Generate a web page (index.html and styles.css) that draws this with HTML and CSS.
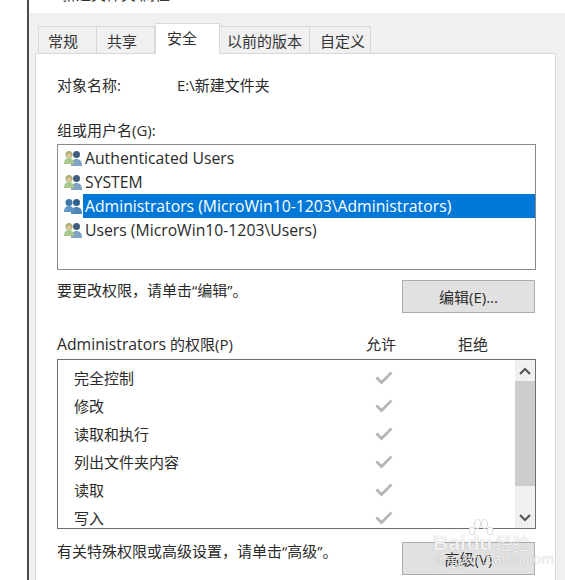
FILE: index.html
```html
<!DOCTYPE html>
<html lang="zh-CN">
<head>
<meta charset="utf-8">
<title>新建文件夹 属性</title>
<link rel="stylesheet" href="styles.css">
</head>
<body>
<svg class="defs" width="0" height="0" aria-hidden="true">
  <symbol id="chk" viewBox="0 0 18 14"><path d="M1.500 6.500 6.500 11.500 16.500 1.500" fill="none" stroke="#b5b5b5" stroke-width="2.800"/></symbol>
</svg>
<div class="window">
  <div class="titlebar">
    <svg class="folder" width="14" height="12" viewBox="0 0 14 12"><path d="M0 0h14v4Q8 6 3 5H0z" fill="#f3d27a"/></svg>
    <span class="title">新建文件夹 属性</span>
  </div>
  <div class="tabs">
    <div class="tab t1">常规</div>
    <div class="tab t2">共享</div>
    <div class="tab active">安全</div>
    <div class="tab t4">以前的版本</div>
    <div class="tab t5">自定义</div>
  </div>
  <div class="panel">
    <div class="object"><span class="object-label">对象名称:</span><span>E:\新建文件夹</span></div>
    <div class="group-label">组或用户名(G):</div>
    <div class="users">
      <div class="user">
        <svg class="uicon" width="18" height="16" viewBox="0 0 18 16"><circle cx="12.500" cy="4.500" r="3.500" fill="#3f5f7f"/><path d="M7 16c0-5 2-7 5.500-7S18 11 18 16z" fill="#7fa3c4"/><circle cx="5" cy="4.500" r="3.500" fill="#a8ae6c"/><circle cx="5" cy="5.500" r="2.200" fill="#e3c6a0"/><path d="M0 14c0-4 2-6 5-6s5 2 5 6z" fill="#a9c98d"/></svg>
        <span class="uname">Authenticated Users</span>
      </div>
      <div class="user">
        <svg class="uicon" width="18" height="16" viewBox="0 0 18 16"><circle cx="12.500" cy="4.500" r="3.500" fill="#3f5f7f"/><path d="M7 16c0-5 2-7 5.500-7S18 11 18 16z" fill="#7fa3c4"/><circle cx="5" cy="4.500" r="3.500" fill="#a8ae6c"/><circle cx="5" cy="5.500" r="2.200" fill="#e3c6a0"/><path d="M0 14c0-4 2-6 5-6s5 2 5 6z" fill="#a9c98d"/></svg>
        <span class="uname">SYSTEM</span>
      </div>
      <div class="user">
        <svg class="uicon" width="18" height="16" viewBox="0 0 18 16"><circle cx="12.500" cy="4.500" r="3.500" fill="#2f5f8f"/><path d="M7 16c0-5 2-7 5.500-7S18 11 18 16z" fill="#4f86b8"/><circle cx="5" cy="4.500" r="3.500" fill="#3f78a8"/><path d="M0 14c0-4 2-6 5-6s5 2 5 6z" fill="#5f98c8"/></svg>
        <span class="uname selected">Administrators (MicroWin10-1203\Administrators)</span>
      </div>
      <div class="user">
        <svg class="uicon" width="18" height="16" viewBox="0 0 18 16"><circle cx="12.500" cy="4.500" r="3.500" fill="#3f5f7f"/><path d="M7 16c0-5 2-7 5.500-7S18 11 18 16z" fill="#7fa3c4"/><circle cx="5" cy="4.500" r="3.500" fill="#a8ae6c"/><circle cx="5" cy="5.500" r="2.200" fill="#e3c6a0"/><path d="M0 14c0-4 2-6 5-6s5 2 5 6z" fill="#a9c98d"/></svg>
        <span class="uname">Users (MicroWin10-1203\Users)</span>
      </div>
    </div>
    <div class="action first">
      <span class="hint">要更改权限，请单击“编辑”。</span>
      <button class="btn">编辑(E)...</button>
    </div>
    <div class="perm-head">
      <span class="perm-title"><span class="latin">Administrators</span> 的权限(P)</span>
      <span class="col-allow">允许</span>
      <span class="col-deny">拒绝</span>
    </div>
    <div class="perms">
      <div class="perm-rows">
        <div class="perm"><span>完全控制</span><svg class="chk" width="18" height="14"><use href="#chk"/></svg></div>
        <div class="perm"><span>修改</span><svg class="chk" width="18" height="14"><use href="#chk"/></svg></div>
        <div class="perm"><span>读取和执行</span><svg class="chk" width="18" height="14"><use href="#chk"/></svg></div>
        <div class="perm"><span>列出文件夹内容</span><svg class="chk" width="18" height="14"><use href="#chk"/></svg></div>
        <div class="perm"><span>读取</span><svg class="chk" width="18" height="14"><use href="#chk"/></svg></div>
        <div class="perm"><span>写入</span><svg class="chk" width="18" height="14"><use href="#chk"/></svg></div>
      </div>
      <div class="scrollbar">
        <div class="arrow up"><svg width="12" height="8" viewBox="0 0 12 8"><path d="M1 7 6 2l5 5" fill="none" stroke="#555" stroke-width="2"/></svg></div>
        <div class="thumb"></div>
        <div class="track"></div>
        <div class="arrow down"><svg width="12" height="8" viewBox="0 0 12 8"><path d="M1 1l5 5 5-5" fill="none" stroke="#555" stroke-width="2"/></svg></div>
      </div>
    </div>
    <div class="action second">
      <span class="hint">有关特殊权限或高级设置，请单击“高级”。</span>
      <button class="btn">高级(V)</button>
    </div>
  </div>
  <div class="watermark">
    <svg class="paw" width="26" height="24" viewBox="0 0 26 24"><g fill="#fff" stroke="#dcdcdc" stroke-width="1"><ellipse cx="4" cy="12" rx="3" ry="4"/><ellipse cx="9.500" cy="5" rx="3" ry="4.500"/><ellipse cx="16.500" cy="5" rx="3" ry="4.500"/><ellipse cx="22" cy="12" rx="3" ry="4"/></g></svg>
    <div class="wm-main">Bai<span class="wm-du">du</span><span class="wm-cn">经验</span></div>
    <div class="wm-url">jingyan.baidu.com</div>
  </div>
</div>
</body>
</html>
```
FILE: styles.css
```css
* { box-sizing: border-box; }
html, body { margin: 0; padding: 0; }
body {
  width: 565px;
  height: 580px;
  overflow: hidden;
  background: #fff;
  color: #2a2a2a;
  font: 15px/20px "Open Sans", "Noto Sans CJK SC", sans-serif;
}
.defs { position: absolute; }
.window {
  position: relative;
  margin-left: 27px;
  height: 580px;
  border-left: 2px solid #4a4a4a;
  background: #f0f0f0;
  overflow: hidden;
}
.titlebar {
  display: flex;
  height: 13px;
  background: #fff;
  overflow: hidden;
  padding-left: 7px;
}
.folder { flex: none; margin-top: -7px; }
.title { margin: -16px 0 0 11px; font-size: 15px; color: #333; }

.tabs {
  display: flex;
  height: 27px;
  margin: 13px 0 0 9px;
}
.tab {
  height: 27px;
  padding-left: 10px;
  border: 1px solid #d9d9d9;
  border-left: 0;
  border-bottom: 0;
  background: #f0f0f0;
  line-height: 29px;
  color: #333;
}
.t1 { width: 59px; padding-left: 9px; border-left: 1px solid #d9d9d9; }
.t2 { width: 58px; }
.t4 { width: 90px; padding-left: 7px; }
.t5 { width: 61px; }
.tab.active {
  position: relative;
  z-index: 1;
  width: 65px;
  height: 31px;
  margin-top: -3px;
  padding-left: 11px;
  border: 1px solid #d9d9d9;
  border-bottom: 0;
  background: #fff;
  line-height: 29px;
}
.panel {
  width: 521px;
  height: 560px;
  margin-left: 6px;
  padding: 21px 0 0 21px;
  border: 1px solid #d9d9d9;
  background: #fff;
}
.object { display: flex; }
.object-label { width: 120px; }
.group-label { margin-top: 25px; }
.users {
  width: 479px;
  height: 126px;
  margin-top: 4px;
  padding-top: 1px;
  border: 1px solid #8a8a8a;
}
.user {
  display: flex;
  align-items: center;
  height: 24px;
  padding-left: 6px;
}
.uicon { flex: none; margin-right: 1px; }
.uname {
  flex: 1;
  height: 24px;
  padding-left: 2px;
  font-size: 15.75px;
  line-height: 24px;
}
.uname.selected { background: #0078d7; color: #fff; }
.action {
  display: flex;
  justify-content: space-between;
  align-items: flex-start;
  width: 478px;
}
.action.first { margin-top: 10px; }
.action.second { margin-top: 12px; }
.action.second .btn { margin-top: 1px; }
.btn {
  flex: none;
  width: 133px;
  height: 33px;
  padding: 0;
  border: 1px solid #adadad;
  background: #e1e1e1;
  color: #2a2a2a;
  font: inherit;
}
.perm-head {
  display: flex;
  margin-top: 21px;
}
.perm-title { width: 309px; }
.latin { font-size: 15.75px; }
.col-allow { width: 92px; }
.perms {
  display: flex;
  width: 479px;
  height: 170px;
  margin-top: 5px;
  border: 1px solid #6e6e6e;
  overflow: hidden;
}
.perm-rows {
  flex: 1;
  padding-top: 4px;
  overflow: hidden;
}
.perm {
  display: flex;
  align-items: center;
  height: 28px;
  padding-left: 16px;
}
.perm span { width: 301px; flex: none; }
.chk { flex: none; }
.scrollbar {
  flex: none;
  display: flex;
  flex-direction: column;
  width: 20px;
  background: #f0f0f0;
}
.arrow {
  display: flex;
  align-items: center;
  justify-content: center;
  flex: none;
  height: 21px;
}
.thumb { flex: none; height: 105px; background: #cdcdcd; }
.track { flex: 1; }
.watermark {
  position: absolute;
  left: 404px;
  top: 519px;
  width: 110px;
  height: 60px;
  color: rgba(255, 255, 255, .85);
  text-shadow: 0 0 1px rgba(0, 0, 0, .3);
}
.paw { position: absolute; left: 35px; top: 0; }
.wm-main {
  position: absolute;
  left: 0;
  top: 13px;
  white-space: nowrap;
  font: bold 21px/22px "Liberation Sans", sans-serif;
}
.wm-du { margin-left: 1px; }
.wm-cn {
  margin-left: 3px;
  font: 17px/22px "Noto Sans CJK SC", sans-serif;
}
.wm-url {
  position: absolute;
  left: 2px;
  top: 31px;
  white-space: nowrap;
  font: 14px/18px "Open Sans", sans-serif;
}
```
